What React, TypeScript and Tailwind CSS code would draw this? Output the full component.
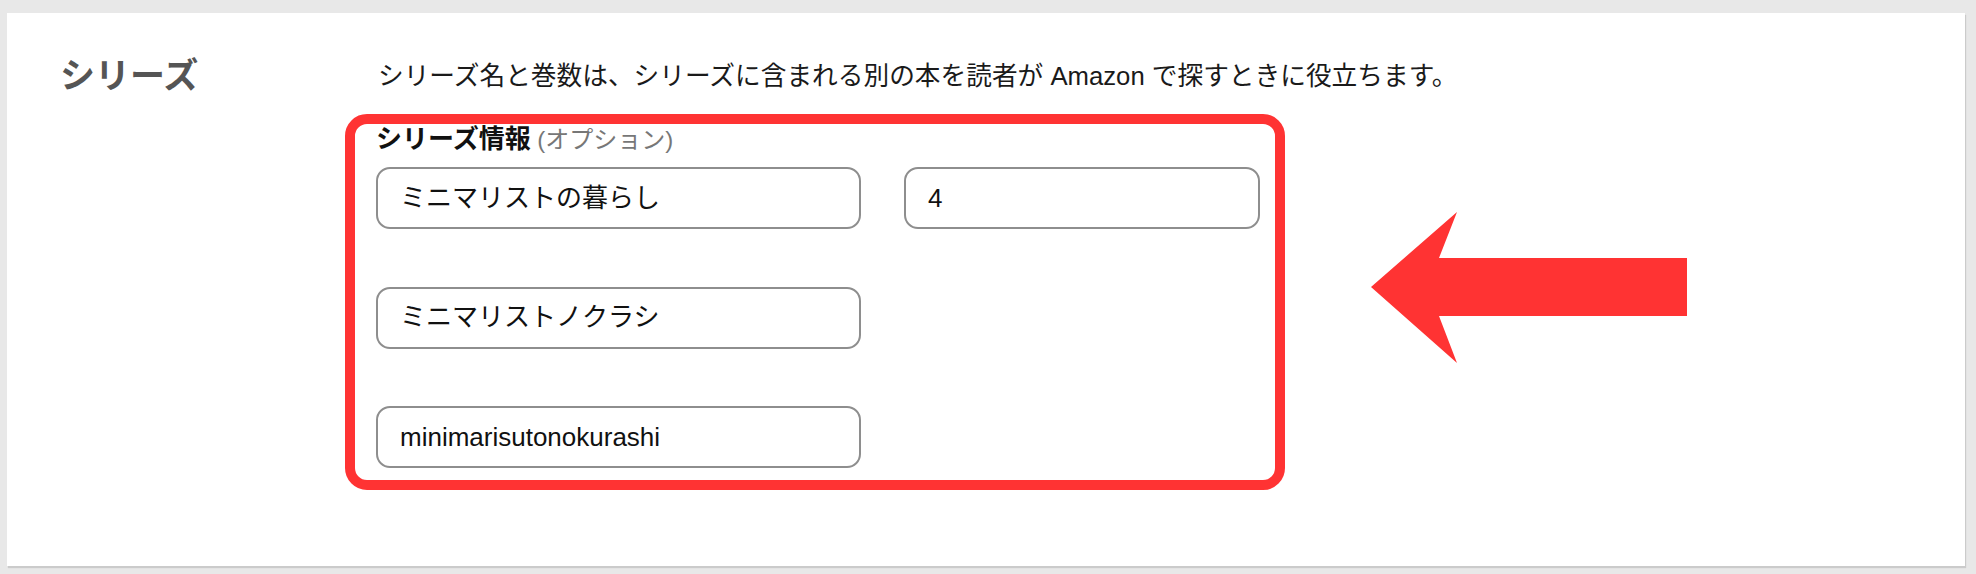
import React from "react";

const jp = { fontFamily: '"Liberation Sans", "Noto Sans CJK JP", sans-serif' };

function Field({ value, width }: { value: string; width: string }) {
  return (
    <div
      className={`${width} h-[62px] flex items-center pl-[22px] rounded-[14px] border-2 border-[#8e8e8e] bg-white text-[26px] text-[#111]`}
    >
      {value}
    </div>
  );
}

function ArrowLeft() {
  return (
    <svg width="316" height="151" viewBox="0 0 316 151" className="block">
      <polygon
        points="0,75 86,0 68,46 316,46 316,104 68,104 86,151"
        fill="#ff3333"
      />
    </svg>
  );
}

export default function App() {
  return (
    <div className="min-h-[574px] w-full bg-[#e8e8e8] pt-[13px] pl-[7px] pr-[10px]" style={jp}>
      <div className="w-[1958px] h-[553px] bg-white shadow-[1px_2px_1px_rgba(0,0,0,0.12)] flex pt-[41px] pl-[53px]">
        <div className="w-[285px] text-[35px] leading-[44px] font-bold text-[#555]">シリーズ</div>
        <div className="flex flex-col">
          <p className="pl-[33px] text-[25.7px] leading-[44px] text-[#1a1a1a] whitespace-nowrap">
            シリーズ名と巻数は、シリーズに含まれる別の本を読者が Amazon で探すときに役立ちます。
          </p>
          <div className="flex items-start mt-[16px]">
            <div className="w-[940px] h-[376px] border-[10px] border-[#ff3333] rounded-[22px] pl-[21px] pr-[14px]">
              <div className="text-[26px] leading-[30px] text-[#111]">
                <span className="font-bold">シリーズ情報</span>
                <span className="text-[24px] text-[#777]"> (オプション)</span>
              </div>
              <div className="mt-[12px] flex flex-col gap-[57.5px]">
                <div className="flex gap-[43px]">
                  <Field value="ミニマリストの暮らし" width="w-[485px]" />
                  <Field value="4" width="w-[356px]" />
                </div>
                <Field value="ミニマリストノクラシ" width="w-[485px]" />
                <Field value="minimarisutonokurashi" width="w-[485px]" />
              </div>
            </div>
            <div className="ml-[86px] mt-[98px]">
              <ArrowLeft />
            </div>
          </div>
        </div>
      </div>
    </div>
  );
}
